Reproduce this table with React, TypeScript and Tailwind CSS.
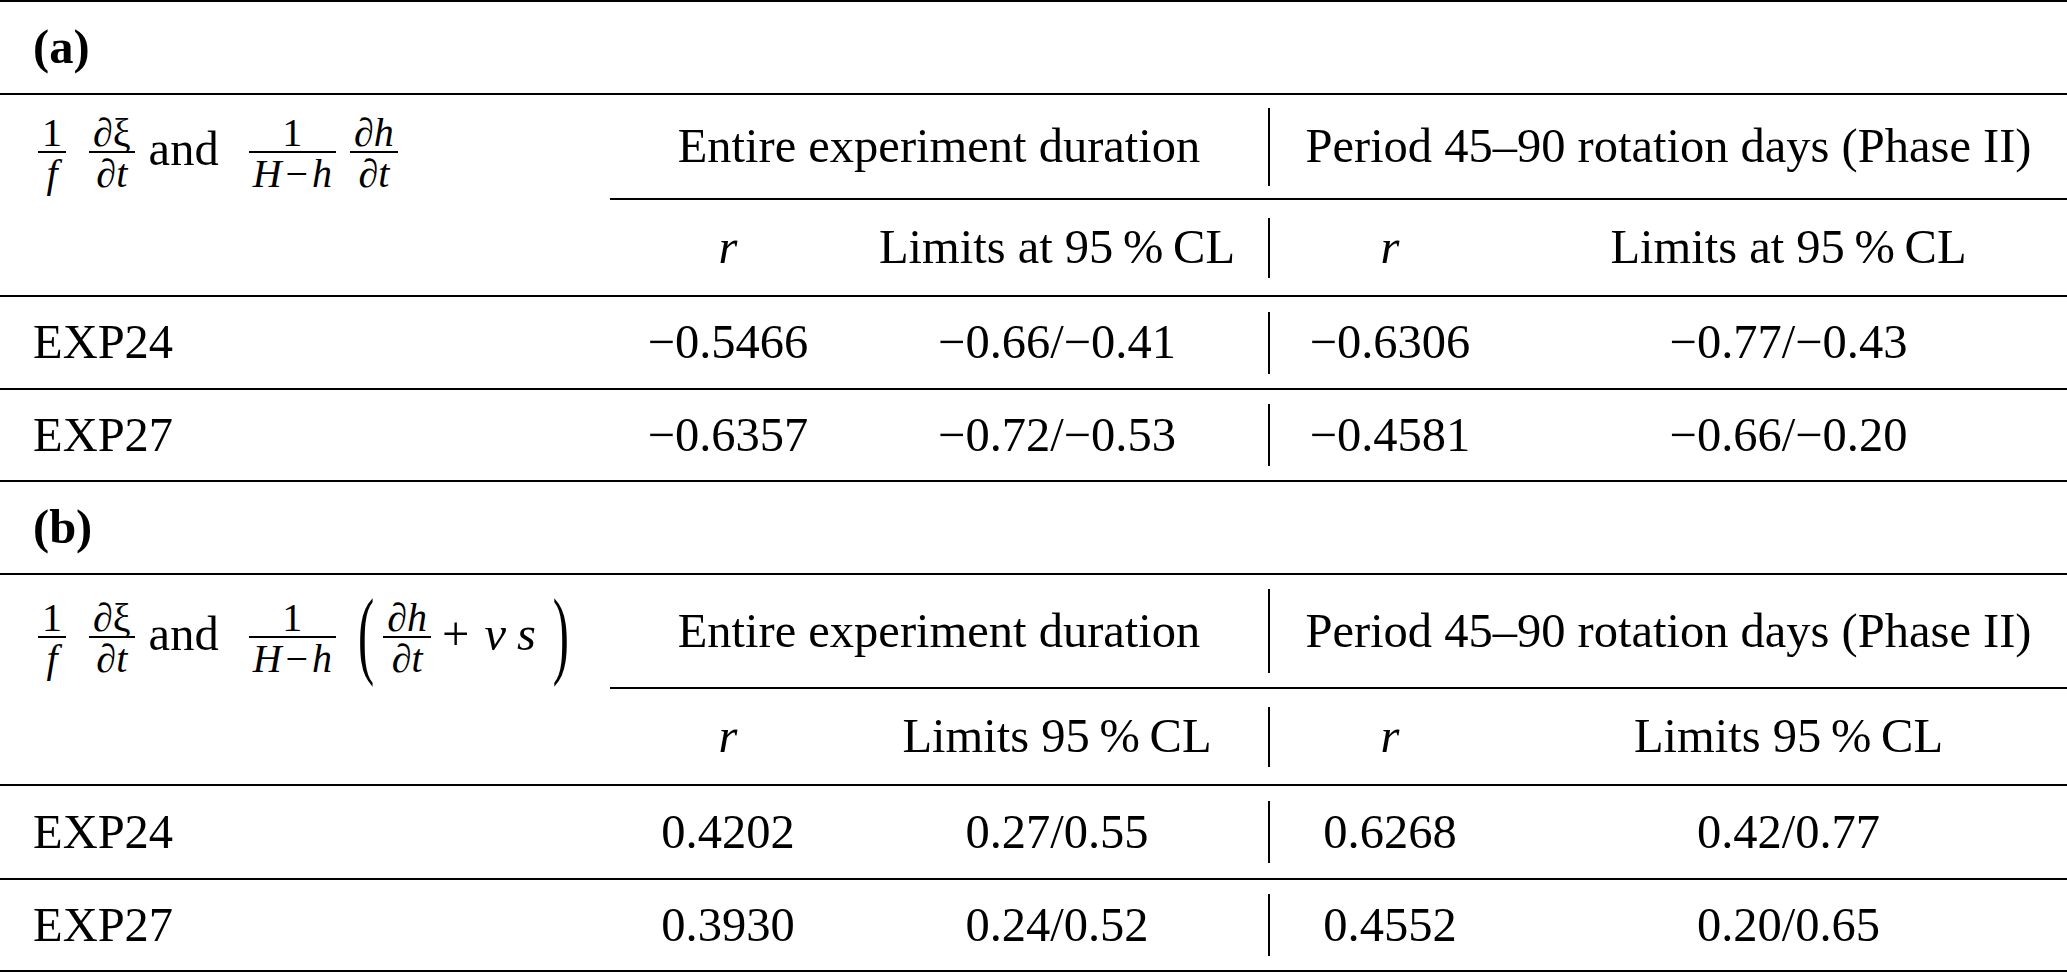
import React from "react";

function Frac({ num, den, cls = "" }: { num: React.ReactNode; den: React.ReactNode; cls?: string }) {
  return (
    <span className={`inline-flex flex-col items-center align-[19px] text-[40px] ${cls}`}>
      <span className="h-[36px] leading-[36px] px-[4px] whitespace-nowrap">{num}</span>
      <span className="h-[2px] w-full bg-black" />
      <span className="mt-[3px] h-[36px] leading-[36px] px-[4px] whitespace-nowrap">{den}</span>
    </span>
  );
}

function FormulaStart() {
  return (
    <>
      <Frac cls="px-[1px]" num="1" den={<i>f</i>} />
      <Frac cls="ml-[22px]" num={<>∂ξ</>} den={<>∂<i>t</i></>} />
      <span className="ml-[14px]">and</span>
      <Frac
        cls="ml-[30px]"
        num="1"
        den={
          <>
            <i>H</i>
            <span className="mx-[4px]">−</span>
            <i>h</i>
          </>
        }
      />
    </>
  );
}

function FormulaA() {
  return (
    <span className="whitespace-nowrap">
      <FormulaStart />
      <Frac cls="ml-[11px] px-[3px]" num={<>∂<i>h</i></>} den={<>∂<i>t</i></>} />
    </span>
  );
}

function FormulaB() {
  return (
    <span className="whitespace-nowrap">
      <FormulaStart />
      <span className="inline-block scale-y-[2] leading-none ml-[22px]">(</span>
      <Frac cls="ml-[9px]" num={<>∂<i>h</i></>} den={<>∂<i>t</i></>} />
      <span className="ml-[11px]">+</span>
      <span className="ml-[15px] italic">
        <span className="mr-[11px]">v</span>s
      </span>
      <span className="inline-block scale-y-[2] leading-none ml-[17px]">)</span>
    </span>
  );
}

function Sep({ h }: { h: string }) {
  return <div className={`w-[2px] shrink-0 bg-black self-center ${h}`} />;
}

function Cell({ w, children }: { w: string; children: React.ReactNode }) {
  return <div className={`${w} shrink-0 flex items-center justify-center whitespace-nowrap`}>{children}</div>;
}

function DataRow({ label, v, h }: { label: string; v: string[]; h: string }) {
  return (
    <div className={`flex ${h} border-b-2 border-black`}>
      <div className="w-[610px] shrink-0 flex items-center pl-[33px]">{label}</div>
      <Cell w="w-[236px]">{v[0]}</Cell>
      <Cell w="w-[422px]">{v[1]}</Cell>
      <Sep h="h-[62px]" />
      <Cell w="w-[240px]">{v[2]}</Cell>
      <div className="flex-1 flex items-center justify-center whitespace-nowrap">{v[3]}</div>
    </div>
  );
}

function Section({
  title,
  formula,
  formulaPad,
  h1,
  sep1,
  limits,
  rows,
  rowHeights,
}: {
  title: string;
  formula: React.ReactNode;
  formulaPad: string;
  h1: string;
  sep1: string;
  limits: string;
  rows: { label: string; v: string[] }[];
  rowHeights: string[];
}) {
  return (
    <>
      <div className="flex h-[93px] items-center border-b-2 border-black pl-[33px] font-bold">{title}</div>
      <div className={`flex ${h1}`}>
        <div className={`w-[610px] shrink-0 self-start pl-[37px] ${formulaPad}`}>{formula}</div>
        <div className="flex-1 flex h-full border-b-2 border-black">
          <Cell w="w-[658px]">Entire experiment duration</Cell>
          <Sep h={sep1} />
          <div className="flex-1 flex items-center justify-center whitespace-nowrap">
            Period 45–90 rotation days (Phase II)
          </div>
        </div>
      </div>
      <div className="flex h-[97px] border-b-2 border-black">
        <div className="w-[610px] shrink-0" />
        <Cell w="w-[236px]">
          <i>r</i>
        </Cell>
        <Cell w="w-[422px]">{limits}</Cell>
        <Sep h="h-[60px]" />
        <Cell w="w-[240px]">
          <i>r</i>
        </Cell>
        <div className="flex-1 flex items-center justify-center whitespace-nowrap">{limits}</div>
      </div>
      {rows.map((r, i) => (
        <DataRow key={i} label={r.label} v={r.v} h={rowHeights[i]} />
      ))}
    </>
  );
}

export default function App() {
  return (
    <div className="w-[2067px] h-[973px] bg-white text-black font-['Liberation_Serif',serif] text-[48.5px] overflow-hidden">
      <div className="h-[2px] bg-black" />
      <Section
        title="(a)"
        formula={<FormulaA />}
        formulaPad="pt-[18px]"
        h1="h-[105px]"
        sep1="h-[78px]"
        limits={"Limits at 95\u2009%\u2009CL"}
        rows={[
          { label: "EXP24", v: ["\u22120.5466", "\u22120.66/\u22120.41", "\u22120.6306", "\u22120.77/\u22120.43"] },
          { label: "EXP27", v: ["\u22120.6357", "\u22120.72/\u22120.53", "\u22120.4581", "\u22120.66/\u22120.20"] },
        ]}
        rowHeights={["h-[93px]", "h-[92px]"]}
      />
      <Section
        title="(b)"
        formula={<FormulaB />}
        formulaPad="pt-[23px]"
        h1="h-[114px]"
        sep1="h-[84px]"
        limits={"Limits 95\u2009%\u2009CL"}
        rows={[
          { label: "EXP24", v: ["0.4202", "0.27/0.55", "0.6268", "0.42/0.77"] },
          { label: "EXP27", v: ["0.3930", "0.24/0.52", "0.4552", "0.20/0.65"] },
        ]}
        rowHeights={["h-[94px]", "h-[92px]"]}
      />
    </div>
  );
}
